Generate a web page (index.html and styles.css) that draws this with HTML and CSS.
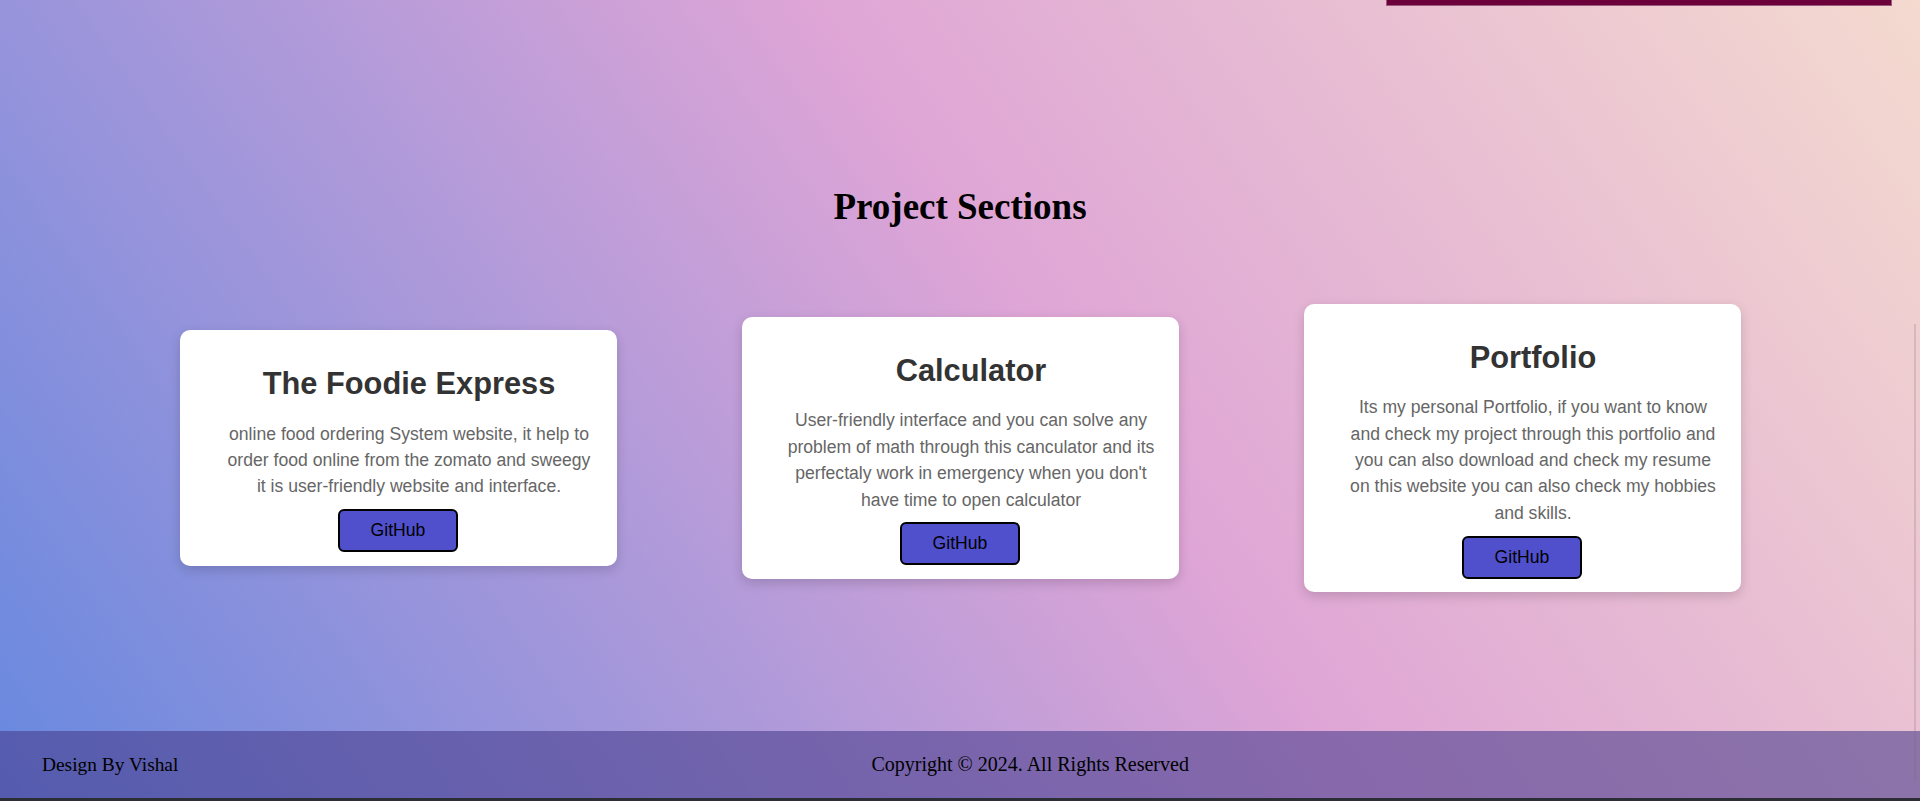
FILE: index.html
```html
<!DOCTYPE html>
<html lang="en">
<head>
<meta charset="utf-8">
<title>Project Sections</title>
<link rel="stylesheet" href="styles.css">
</head>
<body>
<div class="page">
  <header class="topbar">
    <div class="topbar-block"></div>
  </header>
  <main class="projects">
    <h1 class="projects-title">Project Sections</h1>
    <div class="cards">
      <div class="card">
        <h2 class="card-title">The Foodie Express</h2>
        <p class="card-text">online food ordering System website, it help to order food online from the zomato and sweegy it is user-friendly website and interface.</p>
        <a class="btn" href="#">GitHub</a>
      </div>
      <div class="card">
        <h2 class="card-title">Calculator</h2>
        <p class="card-text">User-friendly interface and you can solve any problem of math through this canculator and its perfectaly work in emergency when you don't have time to open calculator</p>
        <a class="btn" href="#">GitHub</a>
      </div>
      <div class="card">
        <h2 class="card-title">Portfolio</h2>
        <p class="card-text">Its my personal Portfolio, if you want to know and check my project through this portfolio and you can also download and check my resume on this website you can also check my hobbies and skills.</p>
        <a class="btn" href="#">GitHub</a>
      </div>
    </div>
  </main>
  <footer class="footer">
    <span class="footer-credit">Design By Vishal</span>
    <span class="footer-copy">Copyright © 2024. All Rights Reserved</span>
    <span class="footer-end"></span>
  </footer>
  <div class="bottom-strip"></div>
  <div class="side-line"></div>
</div>
</body>
</html>
```

FILE: styles.css
```css
* {
  box-sizing: border-box;
}

html, body {
  margin: 0;
  padding: 0;
}

body {
  width: 1920px;
  height: 801px;
  overflow: hidden;
  font-family: "Liberation Serif", "Times New Roman", serif;
}

.page {
  position: relative;
  width: 1920px;
  height: 801px;
  display: flex;
  flex-direction: column;
  background: linear-gradient(55deg, #6688df 0%, #dea5d6 55%, #f4dacf 100%);
}

.topbar {
  display: flex;
  justify-content: flex-end;
  padding-right: 28px;
  height: 6px;
}

.topbar-block {
  width: 506px;
  height: 6px;
  background: #6b003b;
  border: 1px solid rgba(255, 255, 255, 0.35);
  border-top: none;
}

.projects {
  flex: 1;
  display: flex;
  flex-direction: column;
  align-items: center;
}

.projects-title {
  margin: 179px 0 0;
  font-family: "Liberation Serif", "Times New Roman", serif;
  font-size: 37px;
  line-height: 43px;
  font-weight: bold;
  color: #000;
}

.cards {
  margin-top: 76px;
  display: flex;
  align-items: center;
  justify-content: center;
  gap: 125px;
}

.card {
  width: 437px;
  background: #fff;
  border-radius: 10px;
  box-shadow: 0 4px 12px rgba(0, 0, 0, 0.16);
  padding: 35.5px 23px 13.5px;
  display: flex;
  flex-direction: column;
  align-items: center;
  font-family: "Liberation Sans", Arial, sans-serif;
}

.card-title {
  margin: 0 0 19.6px 22px;
  font-size: 30.8px;
  line-height: 35px;
  font-weight: bold;
  color: #333;
  text-align: center;
  align-self: stretch;
}

.card-text {
  margin: 0 0 9.5px 22px;
  font-size: 17.6px;
  line-height: 26.4px;
  color: #666;
  text-align: center;
  align-self: stretch;
}

.btn {
  display: block;
  width: 120px;
  height: 43px;
  line-height: 39px;
  text-align: center;
  background: #5050cd;
  border: 2px solid #000;
  border-radius: 6px;
  color: #000;
  font-size: 17.6px;
  text-decoration: none;
}

.footer {
  height: 67px;
  display: flex;
  align-items: center;
  justify-content: space-between;
  padding: 0 38px 0 42px;
  background: rgba(72, 61, 139, 0.58);
  color: #000;
}

.footer-credit {
  font-size: 19.4px;
  line-height: 23px;
}

.footer-copy {
  font-size: 20px;
  line-height: 23px;
}

.footer-end {
  width: 0;
}

.bottom-strip {
  height: 3px;
  background: #2c2e36;
}

.side-line {
  position: absolute;
  left: 1914px;
  top: 324px;
  width: 2px;
  height: 458px;
  background: rgba(120, 110, 120, 0.22);
}
```
